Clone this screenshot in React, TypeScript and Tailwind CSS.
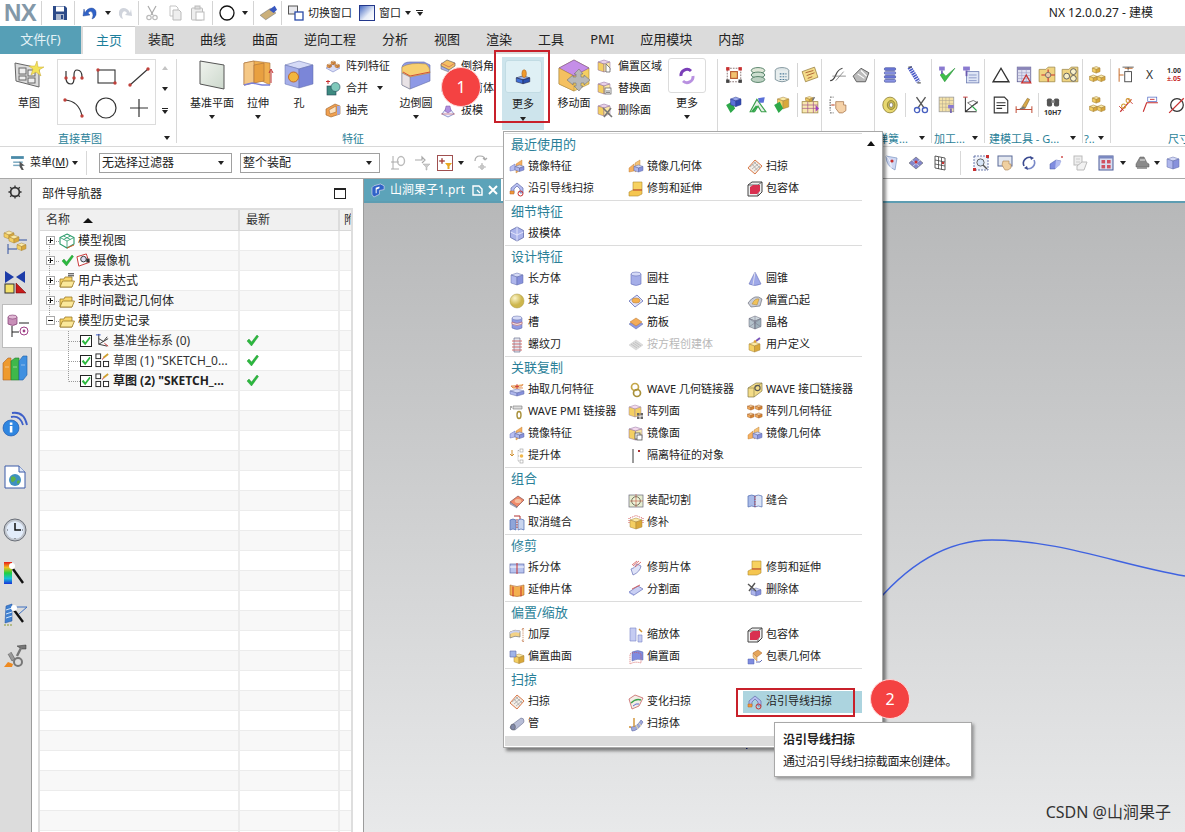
import type { ReactNode } from "react";

// small drawing helpers
function Ico({ s = 16, v = 16, children }: { s?: number; v?: number; children: ReactNode }) {
  return (
    <svg width={s} height={s} viewBox={`0 0 ${v} ${v}`} className="shrink-0">
      {children}
    </svg>
  );
}

function Cube({ x = 2, y = 3, w = 6, h = 4, d = 6, t = "#d5daf6", l = "#aeb6ec", r = "#8791dc", o = "#5f6aa8" }: { x?: number; y?: number; w?: number; h?: number; d?: number; t?: string; l?: string; r?: string; o?: string }) {
  const top = `${x},${y + h * 0.5} ${x + w},${y} ${x + 2 * w},${y + h * 0.5} ${x + w},${y + h}`;
  const left = `${x},${y + h * 0.5} ${x + w},${y + h} ${x + w},${y + h + d} ${x},${y + h * 0.5 + d}`;
  const right = `${x + w},${y + h} ${x + 2 * w},${y + h * 0.5} ${x + 2 * w},${y + h * 0.5 + d} ${x + w},${y + h + d}`;
  return (
    <g stroke={o} strokeWidth="0.5">
      <polygon points={top} fill={t} />
      <polygon points={left} fill={l} />
      <polygon points={right} fill={r} />
    </g>
  );
}

const Y = { t: "#fbeaa6", l: "#f4cf62", r: "#d9a83a", o: "#a8843a" };
const O = { t: "#fbd9a8", l: "#f3ac5a", r: "#d9852f", o: "#a8632a" };

const sweepIcon = (
  <>
    <polygon points="1,9 8,1 15,7 8,15" fill="#f3ede6" stroke="#d97a4a" strokeWidth="1" />
    <path d="M3,8 L9,3 M5,10 L11,5 M7,12 L13,7 M5,5 L11,12 M7,3 L13,9" stroke="#a8a8a8" strokeWidth="0.8" />
  </>
);
const guideIcon = (
  <>
    <path d="M2,12 V7 L8,2 L14,7 V12 H11 V8 L8,5 L5,8 V12 Z" fill="#b5bdf0" stroke="#5f6aa8" strokeWidth="0.7" />
    <path d="M1,10 H5 V13 H1 Z" fill="#ef9a3a" stroke="#b5602a" strokeWidth="0.5" />
    <circle cx="11.5" cy="12.5" r="2.5" fill="none" stroke="#c83030" strokeWidth="1" />
  </>
);
const trimIcon = (
  <>
    <path d="M5,1 H14 V9 H5 Z" fill="#f7d260" stroke="#b08a30" strokeWidth="0.6" />
    <path d="M1,11 L5,9 H14 V13 L10,15 H1 Z" fill="#f5c650" stroke="#b08a30" strokeWidth="0.6" />
    <path d="M5,9 H14" stroke="#c83030" strokeWidth="0.8" />
  </>
);
const bboxIcon = (
  <>
    <path d="M1,4 L5,1 H15 V11 L11,15 H1 Z" fill="#eee" stroke="#444" strokeWidth="1" />
    <path d="M1,4 H11 V15 M11,4 L15,1" stroke="#444" fill="none" strokeWidth="0.8" />
    <path d="M3,6 L6,4 H13 V10 L10,13 H3 Z" fill="#d93050" />
  </>
);
const mirrorFIcon = (
  <>
    <polygon points="7,5 13,1 13,10 7,14" fill="#f6b060" stroke="#b8742a" strokeWidth="0.4" />
    <polygon points="1,8 6,5 6,11 1,12" fill="#b7bdf0" stroke="#6770b8" strokeWidth="0.5" />
    <Cube x={6} y={6} w={4.5} h={3} d={3.5} />
  </>
);
const mirrorBIcon = (
  <>
    <polygon points="1,9 6,5 6,12 1,13" fill="#f6b060" stroke="#b8742a" strokeWidth="0.4" />
    <polygon points="7,4 12,1 12,9 7,13" fill="#f4c47a" stroke="#b8742a" strokeWidth="0.4" />
    <Cube x={6} y={6} w={4.5} h={3} d={4} />
  </>
);

const icons: Record<string, ReactNode> = {
  mirrorF: mirrorFIcon,
  mirrorB: mirrorBIcon,
  sweep: sweepIcon,
  guide: guideIcon,
  trim: trimIcon,
  bbox: bboxIcon,
  draft: (
    <>
      <polygon points="8,1 14.5,4.5 14.5,11.5 8,15 1.5,11.5 1.5,4.5" fill="#aab3ea" stroke="#5f6aa8" strokeWidth="0.8" />
      <path d="M1.5,6 L8,9 L14.5,6 M8,1 V15" stroke="#eef" strokeWidth="0.8" fill="none" />
    </>
  ),
  box: <Cube x={2} y={2} w={6} h={4} d={8} />,
  cyl: (
    <>
      <path d="M3,3 V13 Q8,16 13,13 V3 Z" fill="#a5aee8" stroke="#6670b8" strokeWidth="0.6" />
      <ellipse cx="8" cy="3" rx="5" ry="2" fill="#d5daf6" stroke="#6670b8" strokeWidth="0.6" />
    </>
  ),
  cone: (
    <>
      <path d="M8,1 L2,13 Q8,16 14,13 Z" fill="#9ea8e8" stroke="#6670b8" strokeWidth="0.6" />
      <path d="M8,1 L6,14" stroke="#dde" strokeWidth="1" />
    </>
  ),
  sphere: (
    <>
      <defs>
        <radialGradient id="sph" cx="35%" cy="30%">
          <stop offset="0" stopColor="#fbf4c8" />
          <stop offset="1" stopColor="#cdb64c" />
        </radialGradient>
      </defs>
      <circle cx="8" cy="8" r="7" fill="url(#sph)" stroke="#a9973f" strokeWidth="0.5" />
    </>
  ),
  boss: (
    <>
      <polygon points="1,8 9,2 15,8 7,14" fill="#dfe2f8" stroke="#6670b8" strokeWidth="0.8" />
      <ellipse cx="8" cy="7.5" rx="4" ry="2.5" fill="#f4b04e" stroke="#b8742a" strokeWidth="0.5" />
    </>
  ),
  offBoss: (
    <>
      <path d="M1,10 Q8,0 15,6 L13,13 L4,14 Z" fill="#c9ccd6" stroke="#70737e" strokeWidth="0.7" />
      <path d="M5,11 Q8,5 12,6 L10,12 Z" fill="#f1c25a" stroke="#a8843a" strokeWidth="0.5" />
    </>
  ),
  groove: (
    <>
      <path d="M3,3 V13 Q8,16 13,13 V3 Z" fill="#8f99e2" stroke="#5f6aa8" strokeWidth="0.5" />
      <ellipse cx="8" cy="3" rx="5" ry="2" fill="#d5daf6" stroke="#5f6aa8" strokeWidth="0.5" />
      <path d="M3,7 Q8,10 13,7 V9 Q8,12 3,9 Z" fill="#efe8e8" stroke="#c05050" strokeWidth="0.5" />
    </>
  ),
  rib: (
    <>
      <polygon points="1,9 8,5 15,9 8,14" fill="#8f99e2" stroke="#5f6aa8" strokeWidth="0.5" />
      <polygon points="2,7 8,3 14,7 8,11" fill="#f3ac5a" stroke="#b8742a" strokeWidth="0.5" />
    </>
  ),
  lattice: (
    <>
      <Cube x={2} y={1} w={6} h={5} d={8} t="#cfd8de" l="#b5c3cc" r="#9fb0bb" o="#667" />
      <path d="M2,3.5 L14,12 M14,3.5 L2,12 M8,1 V14" stroke="#778" strokeWidth="0.5" />
    </>
  ),
  thread: (
    <>
      <path d="M5,1 H11 V15 H5 Z" fill="#e4e6f0" stroke="#6d7390" strokeWidth="0.7" />
      <path d="M3,4 H13 M3,7 H13 M3,10 H13 M3,13 H13" stroke="#d06060" strokeWidth="0.9" />
    </>
  ),
  eqn: (
    <>
      <polygon points="1,8 8,3 15,8 8,13" fill="#ddd" stroke="#ccc" strokeWidth="0.5" />
      <path d="M3,7 L9,11 M5,6 L11,10 M7,5 L13,9" stroke="#bbb" strokeWidth="0.8" />
    </>
  ),
  udf: (
    <>
      <Cube x={2} y={5} w={5.5} h={4} d={6} {...Y} />
      <path d="M9,4 L13,1" stroke="#7a55b8" strokeWidth="2" />
      <circle cx="8" cy="4.5" r="1.3" fill="#e0a030" />
    </>
  ),
  extract: (
    <>
      <Cube x={1} y={7} w={7} h={4} d={3} />
      <path d="M2,4 H13 L14,2 M2,4 L4,6 H14" fill="#f5c98a" stroke="#d97a3a" strokeWidth="0.8" />
      <path d="M8,2 V7 M6,4.5 H10" stroke="#c83030" strokeWidth="0.8" />
    </>
  ),
  waveL: (
    <>
      <ellipse cx="7" cy="5" rx="3.5" ry="3.5" fill="none" stroke="#c4a648" strokeWidth="1.7" />
      <ellipse cx="9" cy="11" rx="3.5" ry="3.5" fill="none" stroke="#a8903a" strokeWidth="1.7" />
    </>
  ),
  waveI: (
    <>
      <path d="M1,6 L9,1 H15 V9 L7,15 H1 Z" fill="#f3dc88" stroke="#857a48" strokeWidth="0.7" />
      <path d="M1,6 H7 V15 M7,6 L15,1" stroke="#857a48" strokeWidth="0.6" fill="none" />
      <ellipse cx="10.5" cy="6" rx="2.6" ry="2.6" fill="none" stroke="#555" strokeWidth="1.1" />
    </>
  ),
  waveP: (
    <>
      <path d="M4,2 H13 V5 H4 Z" fill="#dcdcdc" stroke="#777" strokeWidth="0.6" />
      <path d="M1,3 H3 M1,5 H2" stroke="#555" strokeWidth="1" />
      <ellipse cx="10" cy="11" rx="2" ry="3.5" fill="none" stroke="#a8903a" strokeWidth="1.4" />
    </>
  ),
  patF: (
    <>
      <Cube x={1} y={1} w={6} h={4} d={8} t="#f3d9ee" l="#f4cf62" r="#f4cf62" o="#a084a0" />
      <rect x="9" y="9" width="2.5" height="2.5" fill="#666" />
      <rect x="12.5" y="9" width="2.5" height="2.5" fill="#666" />
      <rect x="9" y="12.5" width="2.5" height="2.5" fill="#666" />
      <rect x="12.5" y="12.5" width="2.5" height="2.5" fill="#666" />
    </>
  ),
  patG: (
    <>
      <Cube x={0.5} y={1} w={3.3} h={2.4} d={2.6} {...O} />
      <Cube x={8.5} y={1} w={3.3} h={2.4} d={2.6} {...O} />
      <Cube x={0.5} y={9} w={3.3} h={2.4} d={2.6} {...O} />
      <Cube x={8.5} y={9} w={3.3} h={2.4} d={2.6} {...O} />
    </>
  ),
  mirrorFc: (
    <>
      <Cube x={1} y={1} w={6.5} h={4} d={9} t="#f3d9ee" l="#f4cf62" r="#f7e9a8" o="#8a6a9a" />
      <rect x="7" y="7" width="5" height="6" fill="#fff" stroke="#555" strokeWidth="0.8" />
      <rect x="9" y="9" width="5" height="5" fill="#fff" stroke="#555" strokeWidth="0.8" />
    </>
  ),
  promote: (
    <>
      <path d="M3,2 V8 L1,6 M3,8 L5,6" fill="none" stroke="#d09030" strokeWidth="1" />
      <path d="M9,2.5 H14 M9,2.5 V13 M9,8 H11 M9,13 H11" fill="none" stroke="#999" strokeWidth="0.7" strokeDasharray="1 1" />
      <rect x="11" y="1" width="3" height="3" fill="#fff" stroke="#999" strokeWidth="0.6" />
      <circle cx="12.5" cy="8" r="1.8" fill="#f1b84c" />
      <rect x="11" y="12" width="3" height="3" fill="#fff" stroke="#999" strokeWidth="0.6" />
    </>
  ),
  isolate: (
    <>
      <path d="M5,1 V15" stroke="#222" strokeWidth="0.9" />
      <rect x="10" y="2" width="2" height="2" fill="#a83030" />
    </>
  ),
  bossB: (
    <>
      <polygon points="1,9 9,3 15,7 8,14" fill="#f08a6a" stroke="#885050" strokeWidth="0.7" />
      <polygon points="1,9 8,14 8,15 1,11" fill="#a8a8c8" stroke="#666" strokeWidth="0.4" />
      <ellipse cx="9" cy="8" rx="3.3" ry="2" fill="#f5c0a0" />
    </>
  ),
  assy: (
    <>
      <rect x="1" y="2" width="14" height="12" fill="#e7edcf" stroke="#667" strokeWidth="0.7" />
      <circle cx="8" cy="8" r="4.3" fill="#eef3d8" stroke="#665" strokeWidth="0.9" />
      <path d="M8,1 V14 M2,8 H15" stroke="#c05040" strokeWidth="0.6" />
    </>
  ),
  sew: (
    <>
      <path d="M1,3 Q5,1 8,3 V14 Q5,12 1,14 Z" fill="#a9bbe8" stroke="#4f6ab0" strokeWidth="0.7" />
      <path d="M15,3 Q11,1 8,3 V14 Q11,12 15,14 Z" fill="#dbe4f6" stroke="#4f6ab0" strokeWidth="0.7" />
      <path d="M8,3 V14" stroke="#c83030" strokeWidth="0.8" strokeDasharray="1.5 1" />
    </>
  ),
  unsew: (
    <>
      <path d="M1,5 Q4,3 7,5 V15 Q4,13 1,15 Z" fill="#8fa5d8" stroke="#4f6ab0" strokeWidth="0.7" />
      <path d="M15,5 Q12,3 9,5 V15 Q12,13 15,15 Z" fill="#c8d4ee" stroke="#4f6ab0" strokeWidth="0.7" />
      <path d="M5,1 H11 V4" fill="none" stroke="#b03030" strokeWidth="1" />
      <path d="M8,4 V14" stroke="#a83030" strokeWidth="1" strokeDasharray="1.5 1" />
    </>
  ),
  patch: (
    <>
      <Cube x={2} y={3} w={6} h={4} d={7} {...Y} />
      <path d="M2,3 L8,0.5 L14,3" fill="none" stroke="#c83030" strokeWidth="0.8" strokeDasharray="1 1" />
      <path d="M1,8 V3 M15,8 V3" stroke="#c83030" strokeWidth="0.8" strokeDasharray="1 1" />
    </>
  ),
  split: (
    <>
      <rect x="1" y="4" width="14" height="9" fill="#b8c4ee" stroke="#5f6aa8" strokeWidth="0.7" />
      <path d="M1,7 H15" stroke="#fff" strokeWidth="1" />
      <path d="M8,3 V14" stroke="#c83030" strokeWidth="1" />
    </>
  ),
  trimS: (
    <>
      <path d="M3,9 Q6,9 9,4 L13,6 Q12,12 5,15 Z" fill="#dfe3f8" stroke="#6670b8" strokeWidth="0.7" />
      <path d="M5,6 L11,1 M7,7 L13,2 M4,5 L9,1" stroke="#d05050" strokeWidth="0.8" />
    </>
  ),
  extS: (
    <>
      <path d="M1,3 Q8,6 15,3 V13 Q8,16 1,13 Z" fill="#f3b04f" stroke="#a8632a" strokeWidth="0.6" />
      <path d="M4,4.5 V14.5 M12,4.5 V14.5" stroke="#c83030" strokeWidth="1" />
    </>
  ),
  divF: (
    <>
      <polygon points="1,10 10,4 15,7 6,13" fill="#c9cff4" stroke="#6670b8" strokeWidth="0.7" />
      <path d="M4,7 L12,3" stroke="#d05050" strokeWidth="0.9" />
      <polygon points="1,10 6,13 6,14 1,11" fill="#9aa4e4" />
    </>
  ),
  delB: (
    <>
      <Cube x={4} y={6} w={5} h={3.5} d={4.5} />
      <path d="M1,2 L9,9 M8,1 L2,9" stroke="#555" strokeWidth="1.4" />
    </>
  ),
  thick: (
    <>
      <path d="M1,5 Q6,2 11,4 V10 Q6,8 1,11 Z" fill="#f3d285" stroke="#777" strokeWidth="0.7" />
      <path d="M1,5 Q6,2 11,4 L10,6 Q6,4 1,7 Z" fill="#c9d0ef" />
      <path d="M14,1 V15 M13,3 L14,1 L15,3 M13,13 L14,15 L15,13" fill="none" stroke="#c07040" strokeWidth="0.7" strokeDasharray="1.4 0.8" />
    </>
  ),
  scale: (
    <>
      <path d="M2,1 H8 V14 H2 Z" fill="#c5ccf2" stroke="#7a84c8" strokeWidth="0.6" />
      <path d="M10,8 H14 V15 H10 Z" fill="#c5ccf2" stroke="#7a84c8" strokeWidth="0.6" />
      <path d="M11,2 L14,5" stroke="#d09030" strokeWidth="1.4" />
    </>
  ),
  offS: (
    <>
      <Cube x={5} y={5} w={5} h={3.5} d={6} {...Y} />
      <path d="M1,2 H7 V8 H1 Z" fill="#9fb4e8" stroke="#5f6aa8" strokeWidth="0.6" />
    </>
  ),
  offF: (
    <>
      <path d="M4,3 Q10,0 15,3 V11 Q9,9 4,12 Z" fill="#7f8ce0" stroke="#5f6aa8" strokeWidth="0.5" />
      <path d="M2,5 Q8,2 13,5 V14 Q7,12 2,15 Z" fill="none" stroke="#d05050" strokeWidth="0.8" strokeDasharray="1 1" />
    </>
  ),
  wrap: (
    <>
      <polygon points="6,4 11,1 15,4 10,8" fill="#e5a55a" stroke="#a8632a" strokeWidth="0.5" />
      <polygon points="6,4 10,8 10,12 6,8" fill="#f3c47e" stroke="#a8632a" strokeWidth="0.4" />
      <path d="M1,10 H7 V15 H1 Z" fill="#7f8ce0" stroke="#5060b0" strokeWidth="0.5" />
      <path d="M9,13 H13 L15,11" stroke="#6670b8" fill="none" strokeWidth="1" />
    </>
  ),
  varS: (
    <>
      <path d="M1,5 L7,1 L15,4 L11,12 L4,15 Z" fill="#f3ede6" stroke="#c05050" strokeWidth="0.7" />
      <path d="M3,9 Q8,4 13,6" stroke="#3aa04a" strokeWidth="1.4" fill="none" />
      <path d="M5,12 Q8,9 11,10" stroke="#5f6ad0" strokeWidth="1" fill="none" />
    </>
  ),
  tube: (
    <>
      <path d="M4,8 L12,2 Q15,2 15,5 Q15,7 13,8 L6,14 Q3,14 1,12 Q1,10 4,8 Z" fill="#b7bdd6" stroke="#6a7090" strokeWidth="0.6" />
      <ellipse cx="4" cy="11" rx="2.4" ry="3" fill="#8088a8" stroke="#555" strokeWidth="0.5" />
    </>
  ),
  swept: (
    <>
      <path d="M3,11 Q9,11 13,4 L15,6 Q10,15 4,15 Z" fill="#9ea8d8" stroke="#5f6aa8" strokeWidth="0.6" />
      <path d="M6,2 V11 M3,11 H1" stroke="#d09030" strokeWidth="1.4" />
      <path d="M8,9 L10,13 M11,7 L13,10" stroke="#f0e0a0" strokeWidth="0.9" />
    </>
  ),
  // ribbon small
  pattern: (
    <>
      <polygon points="1,10 8,6 15,10 8,14" fill="#d8dcf6" stroke="#7a84c8" strokeWidth="0.6" />
      <Cube x={2} y={6} w={2.2} h={1.8} d={2} {...O} />
      <Cube x={6} y={3} w={2.2} h={1.8} d={2} {...O} />
      <Cube x={10} y={6} w={2.2} h={1.8} d={2} {...O} />
    </>
  ),
  unite: (
    <>
      <rect x="2" y="6" width="9" height="9" fill="#3d8a80" stroke="#245" strokeWidth="0.6" />
      <circle cx="10.5" cy="7" r="4.5" fill="#7fc9bb" stroke="#245" strokeWidth="0.6" />
      <path d="M1,1.5 H5 M3,0 V4" stroke="#c83030" strokeWidth="1" />
    </>
  ),
  shell: (
    <>
      <path d="M1,7 L10,2 L15,4 V12 L6,15 L1,13 Z" fill="#f0a050" stroke="#99602a" strokeWidth="0.6" />
      <path d="M4,8 L11,4 V10 L5,12 Z" fill="#fbe4c4" stroke="#99602a" strokeWidth="0.5" />
      <path d="M12,4 L15,4 V12 L12,13 Z" fill="#a0a8e0" />
    </>
  ),
  chamfer: (
    <>
      <polygon points="1,6 7,2 15,5 15,8 9,12 1,8" fill="#f4c063" stroke="#666" strokeWidth="0.7" />
      <polygon points="1,8 9,12 9,14 1,11" fill="#a7b0ea" stroke="#666" strokeWidth="0.5" />
      <path d="M1,5 L9,9 L15,5" stroke="#c05050" fill="none" strokeWidth="0.6" />
    </>
  ),
  draftR: (
    <>
      <polygon points="2,12 8,4 14,12 8,15" fill="#eef" stroke="#6670b8" strokeWidth="0.7" />
      <polygon points="6,4 10,4 11,9 8,11 5,9" fill="#b090e0" stroke="#7a50a0" strokeWidth="0.5" />
      <path d="M1,12 H15" stroke="#c05050" strokeWidth="0.6" />
    </>
  ),
  offReg: (
    <>
      <Cube x={1} y={2} w={6} h={4} d={8} t="#e8d0e8" l="#f4cf62" r="#fbe8a8" o="#8a6a9a" />
      <path d="M9,6 V14 H13 V10 L11,8 Z" fill="#fff" stroke="#555" strokeWidth="0.7" />
    </>
  ),
  replF: (
    <>
      <Cube x={1} y={2} w={6} h={4} d={8} t="#e8d0e8" l="#f4cf62" r="#fbe8a8" o="#8a6a9a" />
      <rect x="8" y="8" width="6" height="6" fill="#fff" stroke="#555" strokeWidth="0.7" />
      <path d="M9,11 H13 M9,12.5 H13" stroke="#555" strokeWidth="0.7" />
    </>
  ),
  delF: (
    <>
      <Cube x={1} y={2} w={6} h={4} d={8} t="#e8d0e8" l="#f4cf62" r="#fbe8a8" o="#8a6a9a" />
      <path d="M6,6 L15,15 M14,6 L7,15" stroke="#777" strokeWidth="1.6" />
    </>
  ),
  // right hand cluster
  r1: (
    <>
      <rect x="2" y="2" width="12" height="12" fill="none" stroke="#7f6a6a" strokeWidth="0.8" strokeDasharray="1.5 1" />
      <rect x="5" y="5" width="6" height="6" fill="#f3c270" stroke="#b85a30" />
      <rect x="1" y="1" width="3" height="3" fill="#c83030" />
      <rect x="12" y="1" width="3" height="3" fill="#c83030" />
      <rect x="1" y="12" width="3" height="3" fill="#444" />
      <rect x="12" y="12" width="3" height="3" fill="#444" />
    </>
  ),
  r2: (
    <>
      <ellipse cx="8" cy="4" rx="6" ry="2.6" fill="#dfe7d8" stroke="#4c7a60" strokeWidth="0.8" />
      <ellipse cx="8" cy="8" rx="6" ry="2.6" fill="#cddfd0" stroke="#4c7a60" strokeWidth="0.8" />
      <ellipse cx="8" cy="12" rx="6" ry="2.6" fill="#bcd1c2" stroke="#4c7a60" strokeWidth="0.8" />
    </>
  ),
  r3: (
    <>
      <ellipse cx="8" cy="4" rx="6" ry="2.6" fill="#dfe7e8" stroke="#7a9098" strokeWidth="0.8" />
      <path d="M2,4 V12 Q8,16 14,12 V4" fill="#e8eeee" stroke="#7a9098" strokeWidth="0.8" />
      <path d="M6,7 H12 M6,9.5 H12 M6,12 H12" stroke="#4c7a98" strokeWidth="0.9" strokeDasharray="1.5 1" />
    </>
  ),
  r4: (
    <>
      <path d="M1,5 L12,1 L15,10 L4,14 Z" fill="#f4dc8a" stroke="#998040" strokeWidth="0.7" />
      <path d="M4,6 L11,4 M5,8.5 L12,6 M6,11 L10,9.5" stroke="#a85a30" strokeWidth="0.8" />
    </>
  ),
  r5: (
    <>
      <path d="M1,13 Q4,13 6,8 T12,2" fill="none" stroke="#444" strokeWidth="1.1" />
      <path d="M6,13 L13,5 M3,9 H15" stroke="#777" strokeWidth="0.7" />
    </>
  ),
  r6: (
    <>
      <path d="M1,9 L8,2 L15,6 L12,14 L4,14 Z" fill="#bbb" stroke="#555" strokeWidth="0.8" />
      <path d="M5,7 L11,11 M8,4 L13,9" stroke="#fff" strokeWidth="1" />
    </>
  ),
  r7: (
    <>
      <rect x="3" y="1.5" width="10" height="2.4" rx="1" fill="#6c78d8" stroke="#34408c" strokeWidth="0.5" />
      <rect x="3" y="5" width="10" height="2.4" rx="1" fill="#8a94e4" stroke="#34408c" strokeWidth="0.5" />
      <rect x="3" y="8.5" width="10" height="2.4" rx="1" fill="#6c78d8" stroke="#34408c" strokeWidth="0.5" />
      <rect x="3" y="12" width="10" height="2.4" rx="1" fill="#8a94e4" stroke="#34408c" strokeWidth="0.5" />
    </>
  ),
  r8: (
    <>
      <path d="M4,1 L12,14" stroke="#4a5ac8" strokeWidth="4" strokeDasharray="1.4 0.7" />
      <path d="M3,1 H6 M11,15 H14" stroke="#555" strokeWidth="1" />
    </>
  ),
  r9: (
    <>
      <path d="M2,8 L6,14 L15,2 L7,9 L4,6 Z" fill="#3fbf4a" stroke="#1e8a30" strokeWidth="0.5" />
      <rect x="1" y="0.5" width="5" height="3.5" fill="#8a7ad0" />
      <path d="M3.5,4 V7" stroke="#6a5ab0" strokeWidth="1.4" />
    </>
  ),
  r10: (
    <>
      <rect x="4" y="5" width="11" height="10" fill="#dfe6f6" stroke="#6a7ab0" strokeWidth="0.7" />
      <path d="M6,8 H13 M6,10.5 H13 M6,13 H13" stroke="#7a8ac0" strokeWidth="0.7" />
      <rect x="1" y="0.5" width="6" height="3.5" fill="#8a7ad0" />
      <path d="M4,4 V9" stroke="#6a5ab0" strokeWidth="1.6" />
    </>
  ),
  r11: <path d="M8,2 L15,14 H1 Z" fill="none" stroke="#333" strokeWidth="1.2" />,
  r12: (
    <>
      <rect x="2" y="1" width="12" height="13" fill="#dfe0f0" stroke="#5a5a90" strokeWidth="0.7" />
      <rect x="2" y="1" width="12" height="2.5" fill="#8a84b8" />
      <path d="M2,6 H14 M2,8.5 H14 M2,11 H14 M6,3 V14 M10,3 V14" stroke="#9a9ac0" strokeWidth="0.5" />
      <path d="M10,8 L14,15 H6 Z" fill="none" stroke="#c83030" strokeWidth="1.1" />
    </>
  ),
  r13: (
    <>
      <path d="M1,3 H7 L9,1 H15 V14 H1 Z" fill="#f0d480" stroke="#a08a48" strokeWidth="0.7" />
      <path d="M9,3 V14 M3,8 H15" stroke="#c83030" strokeWidth="1" />
      <circle cx="9" cy="8" r="2.4" fill="#e8c8a8" stroke="#555" strokeWidth="0.6" />
    </>
  ),
  r14: (
    <>
      <path d="M1,3 H7 L9,1 H15 V14 H1 Z" fill="#f0d480" stroke="#a08a48" strokeWidth="0.7" />
      <circle cx="11" cy="5" r="2.6" fill="#f8f0c8" stroke="#555" strokeWidth="0.8" />
      <circle cx="11" cy="11" r="2.6" fill="#f8f0c8" stroke="#555" strokeWidth="0.8" />
      <circle cx="5" cy="9" r="2.6" fill="#f8f0c8" stroke="#555" strokeWidth="0.8" />
    </>
  ),
  cubes: (
    <>
      <Cube x={3} y={0.5} w={3.4} h={2.6} d={3.2} {...Y} />
      <Cube x={0.5} y={8} w={3.4} h={2.6} d={3.2} {...Y} />
      <Cube x={7.5} y={8} w={3.4} h={2.6} d={3.2} {...Y} />
    </>
  ),
  dim: (
    <>
      <rect x="6" y="5" width="6" height="9" fill="none" stroke="#444" strokeWidth="0.8" />
      <path d="M1,2 V14 M1,8 H5 M6,2 H13" stroke="#c87030" strokeWidth="0.9" />
      <path d="M4,1 H14 M9,1 V4" stroke="#444" strokeWidth="0.7" />
    </>
  ),
  s1: (
    <>
      <path d="M1,8 L5,15 L9,11 L6,5 Z" fill="#2ea84a" />
      <Cube x={5} y={1} w={4.6} h={3.4} d={5} t="#9aa8ec" l="#5a70d8" r="#3048b0" o="#2a3a90" />
    </>
  ),
  s2: (
    <>
      <path d="M1,14 L7,3 L15,14 L11,14 L8,9 L5,14 Z" fill="#eaf0ea" stroke="#3aa04a" strokeWidth="1" />
      <path d="M8,2 L14,1 L13,6 L9,6 Z" fill="#5a70d8" />
      <path d="M3,14 L7,9" stroke="#2ea84a" strokeWidth="2" />
    </>
  ),
  s3: (
    <>
      <Cube x={4} y={1} w={5} h={3.4} d={7} {...Y} />
      <path d="M1,8 L5,15 L9,11 L6,5 Z" fill="#2ea84a" />
    </>
  ),
  s4: (
    <>
      <rect x="1" y="5" width="14" height="10" fill="#f8e8b0" stroke="#a08a48" strokeWidth="0.7" />
      <path d="M1,8 H15 M1,11 H15 M6,5 V15 M11,5 V15" stroke="#a0508a" strokeWidth="0.6" />
      <Cube x={4} y={0.5} w={3.4} h={2.4} d={2.2} {...Y} />
      <path d="M12,1 L10,4" stroke="#777" strokeWidth="1.4" />
      <path d="M13,8 L16,11 L13,14 Z" fill="#a040c0" />
    </>
  ),
  s5: (
    <>
      <path d="M1,1 H4 M1,15 H4 M1,3 V13" stroke="#333" strokeWidth="0.8" strokeDasharray="1.3 1" />
      <path d="M6,5 H13 V8 H15 V13 L12,15 H9 L6,11 Z" fill="#f5d2a8" stroke="#a87850" strokeWidth="0.7" />
      <path d="M2,8 H5" stroke="#c05030" strokeWidth="1" />
    </>
  ),
  s6: (
    <>
      <ellipse cx="8" cy="8" rx="6.4" ry="7" fill="#e8d870" stroke="#887a30" strokeWidth="0.7" />
      <ellipse cx="9" cy="8" rx="3.4" ry="4" fill="#c8b850" stroke="#887a30" strokeWidth="0.7" />
      <ellipse cx="9" cy="8" rx="1.6" ry="2" fill="#fff" stroke="#555" strokeWidth="0.5" />
    </>
  ),
  s7: (
    <>
      <path d="M4,1 L11,11 M12,1 L5,11" stroke="#555" strokeWidth="1.2" />
      <circle cx="4.5" cy="12.5" r="2.3" fill="none" stroke="#4860c0" strokeWidth="1.2" />
      <circle cx="11.5" cy="12.5" r="2.3" fill="none" stroke="#4860c0" strokeWidth="1.2" />
    </>
  ),
  s8: (
    <>
      <rect x="1" y="1" width="13" height="13" fill="#f4e2a8" stroke="#9a9a9a" strokeWidth="0.7" />
      <path d="M1,4 H14 M1,7 H14 M1,10 H14 M4,1 V14 M7,1 V14 M10,1 V14" stroke="#b0a890" strokeWidth="0.5" />
      <path d="M9,8 H14 V11 H9 Z" fill="#8a7ad0" />
      <path d="M11.5,11 V15" stroke="#6a5ab0" strokeWidth="1.4" />
    </>
  ),
  s9: (
    <>
      <path d="M3,1 V14 L13,14 M3,14 L14,5" fill="none" stroke="#333" strokeWidth="0.9" />
      <path d="M5,6 L10,4 L14,6 L9,9 Z" fill="none" stroke="#555" strokeWidth="0.7" />
      <path d="M9,9 L13,13" stroke="#2ea84a" strokeWidth="1.2" />
      <path d="M1,1 H5" stroke="#c83030" strokeWidth="0.8" />
    </>
  ),
  s10: (
    <>
      <path d="M2,1 H11 L14,4 V15 H2 Z" fill="#fff" stroke="#333" strokeWidth="1" />
      <path d="M4,6 H12 M4,8.5 H12 M4,11 H9" stroke="#333" strokeWidth="0.9" />
    </>
  ),
  s11: (
    <>
      <path d="M1,12 H15 M1,9 V15 M15,9 V15" stroke="#c0503a" strokeWidth="0.9" />
      <path d="M6,10 L11,2 L13,3 L9,11 Z" fill="#d8a848" stroke="#806a30" strokeWidth="0.5" />
      <path d="M4,11 L8,9 L9,11 L5,12 Z" fill="#777" />
    </>
  ),
  s14: (
    <>
      <path d="M2,14 L12,3" stroke="#c83030" strokeWidth="1" />
      <path d="M1,9 L5,13 M8,2 L13,7" stroke="#c83030" strokeWidth="0.8" />
      <circle cx="9" cy="4" r="1.8" fill="none" stroke="#d0a030" strokeWidth="0.9" />
      <circle cx="5" cy="9" r="1.8" fill="none" stroke="#d0a030" strokeWidth="0.9" />
    </>
  ),
  s15: (
    <>
      <path d="M2,14 L5,6 H15" fill="none" stroke="#c83030" strokeWidth="1" />
      <rect x="6" y="1" width="8" height="4" fill="#fff" stroke="#4860c0" strokeWidth="0.6" />
      <path d="M8,3 H12" stroke="#c83030" strokeWidth="0.8" />
    </>
  ),
  s16: (
    <>
      <circle cx="8" cy="8" r="5.6" fill="none" stroke="#333" strokeWidth="1.1" />
      <path d="M1,15 L14,2" stroke="#c83030" strokeWidth="1.1" />
    </>
  ),
  // selection bar
  menuI: (
    <>
      <rect x="1" y="2" width="12" height="2.6" fill="#4a8aa8" />
      <rect x="3" y="7" width="9" height="1.4" fill="#7aa8c0" />
      <rect x="3" y="10" width="9" height="1.4" fill="#7aa8c0" />
      <path d="M9,7 L14,11 H11 L13,15 L11,15 L9,12 Z" fill="#555" />
    </>
  ),
  g1: (
    <>
      <path d="M3,1 V14 M1,7 H9 M1,14 H9" stroke="#aaa" strokeWidth="1" />
      <ellipse cx="11" cy="6" rx="3.5" ry="4.5" fill="none" stroke="#bbb" strokeWidth="1.4" />
    </>
  ),
  g2: (
    <>
      <path d="M1,5 H7 V2 L10,5 L7,8 M1,5 H0" fill="none" stroke="#aaa" strokeWidth="1.2" />
      <path d="M8,9 H15 L12,12 V15 H11 V12 Z" fill="#ccc" stroke="#aaa" strokeWidth="0.5" />
    </>
  ),
  g3: (
    <>
      <rect x="0.5" y="0.5" width="15" height="15" fill="#fff" stroke="#a05050" />
      <path d="M5,3 V9 M2,6 H8" stroke="#883030" strokeWidth="1" />
      <circle cx="5" cy="6" r="1.2" fill="none" stroke="#c04030" strokeWidth="0.7" />
      <path d="M8,8 H15 L12.5,11 V14 H10.5 V11 Z" fill="#e8a820" />
    </>
  ),
  g4: (
    <>
      <path d="M3,6 Q3,1 8,1 Q13,1 13,5 M13,5 L15,3 M13,5 L11,3" fill="none" stroke="#aaa" strokeWidth="1.2" />
      <path d="M10,8 V15 M6,12 H14" stroke="#bbb" strokeWidth="1.2" />
      <circle cx="10" cy="12" r="2" fill="none" stroke="#bbb" />
    </>
  ),
  t1: (
    <>
      <path d="M3,1 L14,3 L12,15 Q3,11 3,1 Z" fill="#cfd8f4" stroke="#7a94c0" strokeWidth="0.7" />
      <path d="M3,1 Q9,6 8,14" stroke="#fff" strokeWidth="0.8" fill="none" />
      <circle cx="9" cy="6" r="1.6" fill="#c83030" />
    </>
  ),
  t2: (
    <>
      <polygon points="8,2 15,8 8,14 1,8" fill="#8488cc" stroke="#555" strokeWidth="0.5" />
      <path d="M4,5 L11,11 M12,5 L5,11" stroke="#e8e8f8" strokeWidth="0.7" />
      <circle cx="8" cy="7" r="1.5" fill="#c83030" />
    </>
  ),
  t3: (
    <>
      <polygon points="3,1 13,3 13,15 3,13" fill="#fff" stroke="#333" strokeWidth="0.8" />
      <path d="M3,5 L13,7 M3,9 L13,11 M6.5,2 V14 M9.5,2.5 V14.5" stroke="#333" strokeWidth="0.7" />
      <circle cx="11" cy="8" r="1.2" fill="#c83030" />
    </>
  ),
  t4: (
    <>
      <rect x="1" y="1" width="14" height="14" fill="#eef2fa" stroke="#4a5a98" strokeWidth="0.8" strokeDasharray="2 1" />
      <circle cx="7.5" cy="7.5" r="3.6" fill="#d8e6f8" stroke="#555" strokeWidth="0.9" />
      <path d="M10,10 L14,14" stroke="#555" strokeWidth="1.4" />
      <rect x="0" y="13" width="3" height="3" fill="#c83030" />
      <rect x="13" y="0" width="3" height="3" fill="#c83030" />
    </>
  ),
  t5: (
    <>
      <rect x="1" y="1" width="14" height="10" fill="#e4e8f0" stroke="#5a6a98" />
      <path d="M6,6 H12 V9 H14 V13 L11,15 H8 L5,10 Z" fill="#f0d0a0" stroke="#a88050" strokeWidth="0.6" />
    </>
  ),
  t6: (
    <>
      <path d="M3,11 A6,6 0 0 1 11,3" fill="none" stroke="#3a4a90" strokeWidth="1.6" />
      <path d="M13,5 A6,6 0 0 1 5,13" fill="none" stroke="#7a8ac8" strokeWidth="1.6" />
      <path d="M9,1 L13,3 L10,5 Z M7,15 L3,13 L6,11 Z" fill="#3a4a90" />
    </>
  ),
  t7: (
    <>
      <polygon points="2,9 8,5 13,6 7,14 2,14" fill="#7f8ce0" stroke="#4a5aa0" strokeWidth="0.5" />
      <polygon points="8,5 13,6 12,10 7,14" fill="#b3bcf0" />
      <path d="M13,2 H15 M14,1 V3" stroke="#c83030" strokeWidth="0.8" />
    </>
  ),
  t8: (
    <>
      <rect x="2" y="1" width="8" height="9" fill="#eee" stroke="#bbb" />
      <path d="M4,4 H8 M4,7 H8" stroke="#ccc" />
      <path d="M5,11 L10,7 H15 L12,15 H5 Z" fill="#f2f2f2" stroke="#bbb" />
    </>
  ),
  t9: (
    <>
      <rect x="1" y="1" width="14" height="14" fill="#d8ddf0" stroke="#4a5a98" />
      <rect x="1" y="1" width="14" height="2.5" fill="#7a88c0" />
      <rect x="3.5" y="5" width="3.6" height="3.4" fill="#d05060" />
      <rect x="9" y="5" width="3.6" height="3.4" fill="#d05060" />
      <rect x="3.5" y="10" width="3.6" height="3.4" fill="#d05060" />
      <rect x="9" y="10" width="3.6" height="3.4" fill="#d05060" />
    </>
  ),
  t10: (
    <>
      <path d="M2,9 L6,2 H10 L13,8 L15,9 V12 H2 Z" fill="#8a8a8a" stroke="#555" strokeWidth="0.5" />
      <path d="M6,5 H11" stroke="#ddd" strokeWidth="1.2" />
      <path d="M3,13 H13" stroke="#777" strokeWidth="1.4" />
    </>
  ),
};

function Icon({ n, s = 16 }: { n: string; s?: number }) {
  return <Ico s={s}>{icons[n]}</Ico>;
}

function Caret({ c = "border-t-[#222]" }: { c?: string }) {
  return <span className={`inline-block w-0 h-0 border-x-[3.5px] border-t-[4px] border-x-transparent ${c}`} />;
}

function VSep({ h = "h-[24px]", m = "mx-[5px]" }: { h?: string; m?: string }) {
  return <div className={`w-px bg-[#d4d4d4] ${h} ${m}`} />;
}

// title bar
function TitleBar() {
  return (
    <div className="flex items-center h-[26px] bg-white pl-[4px] text-[11px] text-[#222]">
      <span className="w-[33px] font-['Liberation_Sans',sans-serif] font-bold text-[24px] leading-[24px] tracking-[-0.5px] text-[#8398a8]">NX</span>
      <VSep m="mx-[4px]" />
      <div className="ml-[6px]">
        <Ico>
          <path d="M1,1 H13 L15,3 V15 H1 Z" fill="#2c4a88" />
          <rect x="4" y="1.5" width="8" height="5" fill="#fff" />
          <rect x="4" y="9" width="8" height="6" fill="#aab6cc" />
          <rect x="9" y="10" width="2" height="4" fill="#2c4a88" />
        </Ico>
      </div>
      <VSep m="ml-[6px] mr-[7px]" />
      <Ico>
        <path d="M3,8 Q5,3 10,3 Q15,4 14,10 Q13,13 10,14 Q12,10 10,7 Q8,5 6,8 L8,10 L1,11 L2,4 Z" fill="#2f62c8" stroke="#1e408c" strokeWidth="0.4" />
      </Ico>
      <div className="ml-[7px] flex"><Caret /></div>
      <div className="ml-[6px]">
        <Ico>
          <path d="M13,8 Q11,3 6,3 Q1,4 2,10 Q3,13 6,14 Q4,10 6,7 Q8,5 10,8 L8,10 L15,11 L14,4 Z" fill="#d0d4dc" />
        </Ico>
      </div>
      <VSep m="ml-[5px] mr-[5px]" />
      <Ico>
        <path d="M4,1 L9,10 M12,1 L7,10" stroke="#aaa" strokeWidth="1.2" />
        <circle cx="5" cy="12.5" r="2.2" fill="none" stroke="#bbb" strokeWidth="1.2" />
        <circle cx="11" cy="12.5" r="2.2" fill="none" stroke="#bbb" strokeWidth="1.2" />
      </Ico>
      <div className="ml-[7px]">
        <Ico>
          <path d="M3,1 H9 L11,3 V11 H3 Z" fill="#fff" stroke="#c4c4c4" />
          <path d="M6,5 H12 L14,7 V15 H6 Z" fill="#eee" stroke="#bbb" />
        </Ico>
      </div>
      <div className="ml-[7px]">
        <Ico>
          <rect x="1.5" y="3" width="11" height="12" rx="1" fill="#eee" stroke="#bbb" />
          <rect x="5" y="1" width="5" height="3" fill="#ddd" stroke="#bbb" />
          <rect x="6" y="7" width="8" height="8" fill="#fff" stroke="#bbb" />
        </Ico>
      </div>
      <VSep m="ml-[6px] mr-[6px]" />
      <Ico>
        <circle cx="8" cy="8" r="7" fill="none" stroke="#111" strokeWidth="1.3" />
      </Ico>
      <div className="ml-[7px] flex"><Caret /></div>
      <VSep m="ml-[5px] mr-[5px]" />
      <Ico s={18}>
        <path d="M1,10 L10,4 L15,8 L6,14 Z" fill="#cbb07a" stroke="#777" strokeWidth="0.5" />
        <path d="M9,5 L14,1.5 L16,5 L13,8 Z" fill="#3858c0" />
      </Ico>
      <VSep m="ml-[4px] mr-[6px]" />
      <Ico>
        <rect x="0.5" y="1" width="9" height="8" fill="#e8e8ec" stroke="#555" />
        <rect x="7" y="7" width="8" height="8" fill="#fff" stroke="#2a4aa8" strokeWidth="1.3" />
      </Ico>
      <span className="ml-[4px] whitespace-nowrap">切换窗口</span>
      <div className="ml-[7px]">
        <Ico>
          <defs>
            <linearGradient id="win" x1="0" y1="0" x2="1" y2="1">
              <stop offset="0" stopColor="#3c62c0" />
              <stop offset="0.6" stopColor="#e8eef8" />
              <stop offset="1" stopColor="#fff" />
            </linearGradient>
          </defs>
          <rect x="0.5" y="0.5" width="15" height="15" fill="url(#win)" stroke="#23388c" />
        </Ico>
      </div>
      <span className="ml-[4px] w-[26px] whitespace-nowrap">窗口</span>
      <div className="flex"><Caret /></div>
      <div className="ml-[5px] flex flex-col items-center gap-[1px]">
        <div className="w-[7px] h-px bg-[#222]" />
        <Caret />
      </div>
      <span className="ml-auto mr-[32px] leading-none text-[12px]">NX 12.0.0.27 - 建模</span>
    </div>
  );
}

function Tabs() {
  const tabs = ["装配", "曲线", "曲面", "逆向工程", "分析", "视图", "渲染", "工具", "PMI", "应用模块", "内部"];
  return (
    <div className="flex h-[28px] bg-[#dbdbdb] text-[13px] leading-[26px] text-[#222]">
      <div className="w-[81px] bg-[#569fb6] text-[#e4f2f6] text-center">文件(F)</div>
      <div className="ml-[2px] w-[52px] bg-white border-t border-[#c8c8c8] text-center text-[#1d7f9c]">主页</div>
      {tabs.map((t) => (
        <div key={t} className="px-[13px]">{t}</div>
      ))}
    </div>
  );
}

// ribbon
function Group({ w, label, extra, children, sep = true, labelClass = "justify-center" }: { w: string; label?: string; extra?: boolean; children: ReactNode; sep?: boolean; labelClass?: string }) {
  return (
    <div className={`relative flex flex-col shrink-0 ${w}`}>
      <div className="flex h-[76px]">{children}</div>
      <div className={`flex items-center h-[16px] text-[11px] leading-none text-[#2a7f98] ${labelClass}`}>
        {label && <span className="whitespace-nowrap">{label}</span>}
        {extra && <span className="ml-auto mr-[7px] flex"><Caret /></span>}
      </div>
      {sep && <div className="absolute right-0 top-[5px] h-[84px] w-px bg-[#d8d8d8]" />}
    </div>
  );
}

function Big({ w, ml, label, arrow, children }: { w: string; ml: string; label: string; arrow?: boolean; children: ReactNode }) {
  return (
    <div className={`flex flex-col items-center shrink-0 ${w} ${ml}`}>
      <div className="h-[33px] mt-[4px] flex items-center">{children}</div>
      <span className="text-[11px] leading-[14px] mt-[5px] text-[#222] whitespace-nowrap">{label}</span>
      {arrow && <span className="flex mt-[5px]"><Caret /></span>}
    </div>
  );
}

function SmallRows({ ml, w, rows }: { ml: string; w: string; rows: [string, string, boolean?][] }) {
  return (
    <div className={`flex flex-col pt-[1px] shrink-0 ${ml} ${w}`}>
      {rows.map(([ic, t, a]) => (
        <div key={t} className="flex items-center h-[22px] gap-[5px] text-[11px] text-[#222] whitespace-nowrap">
          <Icon n={ic} />
          <span>{t}</span>
          {a && <span className="ml-[4px] flex"><Caret /></span>}
        </div>
      ))}
    </div>
  );
}

function GridIcons({ pl, gap, row1, row2 }: { pl: string; gap: string; row1: ReactNode; row2: ReactNode }) {
  return (
    <div className={`flex flex-col shrink-0 pt-[6px] ${pl}`}>
      <div className={`flex items-center h-[30px] ${gap}`}>{row1}</div>
      <div className={`flex items-center h-[30px] ${gap}`}>{row2}</div>
    </div>
  );
}

function Ribbon() {
  return (
    <div className="flex h-[92px] bg-white">
      <Group w="w-[177px]" label="直接草图" extra labelClass="justify-start pl-[58px]">
        <Big w="w-[36px]" ml="ml-[11px]" label="草图">
          <Ico s={32} v={32}>
            <polygon points="2,4 26,9 26,28 3,22" fill="#dcdcdc" stroke="#666" />
            <rect x="6" y="9" width="7" height="6" fill="#eee" stroke="#666" />
            <rect x="15" y="11" width="7" height="6" fill="#eee" stroke="#666" />
            <rect x="6" y="17" width="7" height="4" fill="#eee" stroke="#666" />
            <rect x="15" y="19" width="7" height="5" fill="#eee" stroke="#666" />
            <path d="M24,2 L25,8 L31,8 L26,11 L28,17 L23,13 L18,16 L20,10 L16,7 L22,7 Z" fill="#f3e35a" stroke="#c8a830" strokeWidth="0.5" />
          </Ico>
        </Big>
        <div className="ml-[10px] mt-[5px] w-[99px] h-[66px] border border-[#dcdcdc] grid grid-cols-3 place-items-center shrink-0 py-[1px]">
          <Ico s={24} v={24}>
            <path d="M4,6 V13 Q4,19 9,19 Q12,19 12,13 V10 Q12,5 15,5 Q20,5 20,12" fill="none" stroke="#333" strokeWidth="1.2" />
            <circle cx="4" cy="13" r="1.7" fill="#c0403a" /><circle cx="12" cy="13" r="1.7" fill="#c0403a" /><circle cx="20" cy="13" r="1.7" fill="#c0403a" />
          </Ico>
          <Ico s={24} v={24}>
            <rect x="4" y="5" width="17" height="13" fill="none" stroke="#333" strokeWidth="1.1" />
            <circle cx="4" cy="5" r="1.7" fill="#c0403a" /><circle cx="21" cy="18" r="1.7" fill="#c0403a" />
          </Ico>
          <Ico s={24} v={24}>
            <path d="M3,20 L21,4" stroke="#333" strokeWidth="1.1" />
            <circle cx="3" cy="20" r="1.7" fill="#c0403a" /><circle cx="21" cy="4" r="1.7" fill="#c0403a" />
          </Ico>
          <Ico s={24} v={24}>
            <path d="M3,4 Q17,5 20,20" fill="none" stroke="#333" strokeWidth="1.2" />
            <circle cx="3" cy="4" r="1.7" fill="#c0403a" /><circle cx="20" cy="20" r="1.7" fill="#c0403a" />
          </Ico>
          <Ico s={24} v={24}>
            <circle cx="12" cy="12" r="10" fill="none" stroke="#333" strokeWidth="1.2" />
          </Ico>
          <Ico s={24} v={24}>
            <path d="M12,3 V21 M3,12 H21" stroke="#333" strokeWidth="1.2" />
          </Ico>
        </div>
        <div className="flex flex-col items-center w-[17px] pt-[12px] gap-[17px]">
          <span className="w-0 h-0 border-x-[3.5px] border-b-[4px] border-x-transparent border-b-[#c4c4c4]" />
          <Caret />
          <span className="flex flex-col items-center gap-[1px]">
            <span className="w-[6px] h-px bg-[#222]" />
            <Caret />
          </span>
        </div>
      </Group>
      <Group w="w-[367px]" label="特征" sep={false} labelClass="justify-start pl-[165px]">
        <Big w="w-[44px]" ml="ml-[13px]" label="基准平面" arrow>
          <Ico s={30} v={30}>
            <defs>
              <linearGradient id="dp" x1="0" y1="0" x2="1" y2="1">
                <stop offset="0" stopColor="#f0f3ee" />
                <stop offset="1" stopColor="#ccd8cc" />
              </linearGradient>
            </defs>
            <polygon points="3,1 27,5 27,29 3,24" fill="url(#dp)" stroke="#555" />
          </Ico>
        </Big>
        <Big w="w-[32px]" ml="ml-[8px]" label="拉伸" arrow>
          <Ico s={32} v={32}>
            <polygon points="2,4 12,2 28,4 28,26 20,22 10,24 2,26" fill="#f0b050" stroke="#a8703a" strokeWidth="0.6" />
            <polygon points="2,4 12,2 12,24 2,26" fill="#f5c886" stroke="#a8703a" strokeWidth="0.6" />
            <polygon points="12,6 22,4 22,22 12,24" fill="#e8a040" stroke="#a8703a" strokeWidth="0.6" />
            <path d="M2,26 L10,24 L20,26 L28,26" stroke="#7a80d8" fill="none" strokeWidth="1.4" />
            <path d="M29,24 V12 M27,14 L29,10 L31,14" stroke="#c03030" strokeWidth="1" fill="none" />
          </Ico>
        </Big>
        <Big w="w-[30px]" ml="ml-[10px]" label="孔">
          <Ico s={30} v={30}>
            <Cube x={1} y={1} w={14} h={8} d={19} t="#d5daf6" l="#a5aee8" r="#7b86d8" />
            <circle cx="9.5" cy="17" r="5" fill="#f2b63e" stroke="#c06a2a" strokeWidth="1" />
          </Ico>
        </Big>
        <SmallRows ml="ml-[11px]" w="w-[70px]" rows={[["pattern", "阵列特征"], ["unite", "合并", true], ["shell", "抽壳"]]} />
        <Big w="w-[36px]" ml="ml-[3px]" label="边倒圆" arrow>
          <Ico s={32} v={32}>
            <path d="M2,8 Q3,3 10,3 H24 L30,6 V22 L10,30 L2,26 Z" fill="#8d99e6" stroke="#5f6aa8" strokeWidth="0.6" />
            <path d="M2,8 Q10,3 26,5 Q30,8 30,14 L10,18 L2,14 Z" fill="#f7cf70" stroke="#a8843a" strokeWidth="0.5" />
            <path d="M2,14 L10,18 V30 L2,26 Z" fill="#e8e2e6" stroke="#777" strokeWidth="0.5" />
            <path d="M3,13 L10,17 L30,13" fill="none" stroke="#c83030" strokeWidth="0.8" />
          </Ico>
        </Big>
        <SmallRows ml="ml-[6px]" w="w-[54px]" rows={[["chamfer", "倒斜角"], ["box", "修剪体"], ["draftR", "拔模"]]} />
      </Group>
      <Group w="w-[174px]" labelClass="justify-center">
        <Big w="w-[36px]" ml="ml-[12px]" label="移动面">
          <Ico s={34} v={34}>
            <polygon points="17,2 32,10 32,26 17,33 2,26 2,10" fill="#f4cf62" stroke="#a8843a" strokeWidth="0.6" />
            <polygon points="17,2 32,10 17,18 2,10" fill="#c58ee8" stroke="#7a50a0" strokeWidth="0.6" />
            <polygon points="2,10 17,18 17,33 2,26" fill="#f4c060" stroke="#a8843a" strokeWidth="0.5" />
            <path d="M22,11 L26,16 H24 V19 H27 V17 L33,22 L27,27 V25 H24 V28 H26 L22,33 L17,28 H19 V25 H16 V27 L10,22 L16,17 V19 H19 V16 H17 Z" fill="#b8b8b8" stroke="#666" strokeWidth="0.5" />
          </Ico>
        </Big>
        <SmallRows ml="ml-[5px]" w="w-[62px]" rows={[["offReg", "偏置区域"], ["replF", "替换面"], ["delF", "删除面"]]} />
        <div className="ml-[9px] shrink-0 w-[38px]">
          <div className="mt-[4px] h-[35px] border border-[#dcdcdc] rounded-[3px] flex items-center justify-center">
            <Ico s={20} v={20}>
              <path d="M4,10 A6,6 0 0 1 14,5" fill="none" stroke="#7a3fb8" strokeWidth="3" />
              <path d="M16,10 A6,6 0 0 1 6,15" fill="none" stroke="#b890e0" strokeWidth="3" />
            </Ico>
          </div>
          <div className="text-center text-[11px] leading-[14px] mt-[3px] text-[#222]">更多</div>
          <div className="flex justify-center mt-[5px]"><Caret /></div>
        </div>
      </Group>
      <Group w="w-[104px]">
        <GridIcons pl="pl-[7px]" gap="gap-[6px]"
          row1={<><Icon n="r1" s={18} /><Icon n="r2" s={18} /><Icon n="r3" s={18} /><VSep m="mr-[-3px]" /><Icon n="r4" s={18} /></>}
          row2={<><Icon n="s1" s={18} /><Icon n="s2" s={18} /><Icon n="s3" s={18} /><VSep m="mr-[-3px]" /><Icon n="s4" s={18} /></>}
        />
      </Group>
      <Group w="w-[53px]">
        <GridIcons pl="pl-[7px]" gap="gap-[5px]"
          row1={<><Icon n="r5" s={18} /><Icon n="r6" s={18} /></>}
          row2={<><Icon n="s5" s={18} /></>}
        />
      </Group>
      <Group w="w-[57px]" label="弹簧..." extra labelClass="justify-start pl-[2px]">
        <GridIcons pl="pl-[6px]" gap="gap-[6px]"
          row1={<><Icon n="r7" s={18} /><Icon n="r8" s={18} /></>}
          row2={<><Icon n="s6" s={18} /><div className="w-px h-[24px] bg-[#d8d8d8]" /><Icon n="s7" s={18} /></>}
        />
      </Group>
      <Group w="w-[53px]" label="加工..." extra labelClass="justify-start pl-[2px]">
        <GridIcons pl="pl-[6px]" gap="gap-[6px]"
          row1={<><Icon n="r9" s={18} /><Icon n="r10" s={18} /></>}
          row2={<><Icon n="s8" s={18} /><Icon n="s9" s={18} /></>}
        />
      </Group>
      <Group w="w-[98px]" label="建模工具 - G..." extra labelClass="justify-start pl-[4px]">
        <GridIcons pl="pl-[7px]" gap="gap-[5px]"
          row1={<><Icon n="r11" s={18} /><Icon n="r12" s={18} /><Icon n="r13" s={18} /><Icon n="r14" s={18} /></>}
          row2={<>
            <Icon n="s10" s={18} />
            <Icon n="s11" s={18} />
            <div className="w-px h-[24px] bg-[#d8d8d8]" />
            <div className="flex flex-col items-center leading-none text-[7px] font-bold text-[#333]">
              <Ico s={14}>
                <rect x="1" y="4" width="6" height="9" rx="2" fill="#555" />
                <rect x="9" y="4" width="6" height="9" rx="2" fill="#555" />
                <rect x="6" y="6" width="4" height="3" fill="#888" />
              </Ico>
              <span>10H7</span>
            </div>
          </>}
        />
      </Group>
      <Group w="w-[28px]" label="?.." extra labelClass="justify-start pl-[1px]">
        <GridIcons pl="pl-[6px]" gap="gap-[5px]" row1={<Icon n="cubes" s={18} />} row2={<Icon n="cubes" s={18} />} />
      </Group>
      <Group w="w-[74px]" label="尺寸" sep={false} labelClass="justify-start pl-[57px]">
        <GridIcons pl="pl-[7px]" gap="gap-[5px]"
          row1={<>
            <Icon n="dim" s={18} />
            <span className="ml-[5px] text-[12px] text-[#333]">X</span>
            <span className="ml-[9px] text-[7px] leading-[8px] text-[#333] font-bold whitespace-nowrap">
              1.00
              <br />
              <span className="text-[#c83030]">±.05</span>
            </span>
          </>}
          row2={<><Icon n="s14" s={18} /><Icon n="s15" s={18} /><span className="ml-[4px]"><Icon n="s16" s={18} /></span></>}
        />
      </Group>
    </div>
  );
}

function SelectBox({ w, ml, text }: { w: string; ml: string; text: string }) {
  return (
    <div className={`flex items-center h-[20px] border border-[#a0a0a0] text-[12px] pl-[2px] pr-[7px] text-[#222] shrink-0 ${w} ${ml}`}>
      <span>{text}</span>
      <span className="ml-auto flex"><Caret /></span>
    </div>
  );
}

function SelectionBar() {
  return (
    <div className="flex items-center h-[33px] bg-white border-y border-[#d8d8d8] border-b-[#a8a8a8] text-[#222]">
      <div className="ml-[10px] flex items-center w-[70px] shrink-0">
        <Icon n="menuI" s={17} />
        <span className="ml-[3px] text-[11px]">菜单(<span className="underline">M</span>)</span>
        <span className="ml-[3px] flex"><Caret /></span>
      </div>
      <div className="ml-[6px] w-px h-[24px] bg-[#d8d8d8]" />
      <SelectBox w="w-[133px]" ml="ml-[12px]" text="无选择过滤器" />
      <SelectBox w="w-[140px]" ml="ml-[8px]" text="整个装配" />
      <div className="ml-[10px] flex items-center">
        <Icon n="g1" />
        <span className="ml-[9px]"><Icon n="g2" /></span>
        <span className="ml-[6px]"><Icon n="g3" /></span>
        <span className="ml-[5px] flex"><Caret /></span>
        <span className="ml-[8px]"><Icon n="g4" /></span>
      </div>
      <div className="ml-[395px] flex items-center">
        <Icon n="t1" />
        <span className="ml-[9px]"><Icon n="t2" /></span>
        <span className="ml-[8px]"><Icon n="t3" /></span>
        <div className="ml-[12px] w-px h-[24px] bg-[#d8d8d8]" />
        <span className="ml-[12px]"><Icon n="t4" /></span>
        <span className="ml-[8px]"><Icon n="t5" /></span>
        <span className="ml-[8px]"><Icon n="t6" /></span>
        <span className="ml-[11px]"><Icon n="t7" /></span>
        <span className="ml-[8px]"><Icon n="t8" /></span>
        <span className="ml-[10px]"><Icon n="t9" /></span>
        <span className="ml-[6px] flex"><Caret /></span>
        <span className="ml-[8px]"><Icon n="t10" /></span>
        <span className="ml-[4px] flex"><Caret /></span>
        <span className="ml-[5px]"><Icon n="box" /></span>
      </div>
    </div>
  );
}

// left resource bar
function SideIcon({ h, mt, active, children }: { h: string; mt: string; active?: boolean; children: ReactNode }) {
  return (
    <div className={`flex items-center justify-center ${h} ${mt} ${active ? "ml-[2px] mr-[-1px] bg-white border border-r-0 border-[#bcbcbc] relative" : "pr-[1px]"}`}>
      {children}
    </div>
  );
}

function Sidebar() {
  return (
    <div className="w-[32px] shrink-0 bg-[#dcdcdc] border-r border-[#9c9c9c] flex flex-col">
      <SideIcon h="h-[26px]" mt="mt-0">
        <Ico s={14}>
          <circle cx="8" cy="8" r="5" fill="none" stroke="#333" strokeWidth="2" />
          <path d="M8,0.5 V3 M8,13 V15.5 M0.5,8 H3 M13,8 H15.5 M2.5,2.5 L4.3,4.3 M11.7,11.7 L13.5,13.5 M2.5,13.5 L4.3,11.7 M11.7,4.3 L13.5,2.5" stroke="#333" strokeWidth="1.5" />
        </Ico>
      </SideIcon>
      <SideIcon h="h-[40px]" mt="mt-[17px]">
        <Ico s={24} v={24}>
          <Cube x={1} y={1} w={5} h={4} d={4} {...Y} />
          <Cube x={6} y={5} w={5} h={4} d={4} {...Y} />
          <Cube x={14} y={13} w={4.5} h={3.5} d={4} {...Y} />
          <path d="M5,14 V24 M5,19 H14 M16,10 H24" stroke="#3050a0" strokeWidth="1" />
        </Ico>
      </SideIcon>
      <SideIcon h="h-[40px]" mt="mt-0">
        <Ico s={24} v={24}>
          <polygon points="2,1 11,7 2,13" fill="#1d3ca8" />
          <polygon points="22,1 13,7 22,13" fill="#1d3ca8" />
          <rect x="2" y="14" width="9" height="9" fill="#f4e26a" stroke="#333" />
          <polygon points="13,13 23,23 13,23" fill="#c81c1c" stroke="#600" strokeWidth="0.5" />
        </Ico>
      </SideIcon>
      <SideIcon h="h-[44px]" mt="mt-[2px]" active>
        <Ico s={24} v={24}>
          <path d="M2,3 Q7,0 11,3 V10 Q7,13 2,10 Z" fill="#c890b8" stroke="#803a70" strokeWidth="0.7" />
          <ellipse cx="6.5" cy="3" rx="4.5" ry="2" fill="#e0b8d4" stroke="#803a70" strokeWidth="0.6" />
          <path d="M6,12 V23 M6,18 H13 M13,9 H23" stroke="#222" strokeWidth="1" />
          <circle cx="18" cy="17" r="4" fill="none" stroke="#a04088" strokeWidth="1" />
          <circle cx="18" cy="17" r="1.4" fill="#a04088" />
        </Ico>
      </SideIcon>
      <SideIcon h="h-[40px]" mt="mt-0">
        <Ico s={26} v={26}>
          <path d="M1,8 L6,3 H9 V25 H1 Z" fill="#ee9a2e" stroke="#a8632a" strokeWidth="0.6" />
          <path d="M9,6 L13,3 H17 V25 H9 Z" fill="#3fb84a" stroke="#227a2a" strokeWidth="0.6" />
          <path d="M17,6 L21,1 H25 V20 L21,25 H17 Z" fill="#3f90e0" stroke="#1f5fa8" strokeWidth="0.6" />
          <path d="M3,12 H7 M11,12 H15 M19,10 H23" stroke="#fff" strokeWidth="0.7" opacity="0.6" />
        </Ico>
      </SideIcon>
      <SideIcon h="h-[40px]" mt="mt-[16px]">
        <Ico s={26} v={26}>
          <path d="M9,6 Q18,4 21,14 M10,2 Q22,0 25,14" fill="none" stroke="#3f60c8" strokeWidth="1.8" />
          <circle cx="9" cy="17" r="8" fill="#2f86e0" stroke="#1a4fa8" strokeWidth="0.6" />
          <rect x="7.8" y="15" width="2.6" height="6.5" fill="#fff" />
          <rect x="7.8" y="11.5" width="2.6" height="2.4" fill="#fff" />
        </Ico>
      </SideIcon>
      <SideIcon h="h-[40px]" mt="mt-[13px]">
        <Ico s={24} v={24}>
          <path d="M2,1 H16 L22,7 V23 H2 Z" fill="#fff" stroke="#3a5aa8" />
          <path d="M16,1 V7 H22" fill="#dde6f6" stroke="#3a5aa8" />
          <circle cx="12" cy="15" r="6" fill="#3f90c0" />
          <path d="M8,12 Q12,10 13,14 Q10,19 8,16 Z M14,16 Q17,14 17,17 Q15,20 14,18 Z" fill="#5cb04a" />
        </Ico>
      </SideIcon>
      <SideIcon h="h-[40px]" mt="mt-[13px]">
        <Ico s={24} v={24}>
          <circle cx="12" cy="12" r="11" fill="#bfc4cc" stroke="#6a6f78" />
          <circle cx="12" cy="12" r="8.8" fill="#e2ecfa" />
          <path d="M12,5 V12 H18" fill="none" stroke="#111" strokeWidth="1.5" />
          <path d="M12,20 V20.8 M4,12 H4.8 M19.2,12 H20" stroke="#333" />
        </Ico>
      </SideIcon>
      <SideIcon h="h-[40px]" mt="mt-[3px]">
        <Ico s={24} v={24}>
          <defs>
            <linearGradient id="rb" x1="0" y1="0" x2="0" y2="1">
              <stop offset="0" stopColor="#e81818" />
              <stop offset="0.25" stopColor="#f0c020" />
              <stop offset="0.5" stopColor="#20d040" />
              <stop offset="0.75" stopColor="#18c0d8" />
              <stop offset="1" stopColor="#1830d8" />
            </linearGradient>
          </defs>
          <rect x="1" y="1" width="8" height="22" fill="url(#rb)" />
          <path d="M10,8 L20,22" stroke="#111" strokeWidth="2.4" />
          <circle cx="9" cy="5" r="3" fill="#fff" />
        </Ico>
      </SideIcon>
      <SideIcon h="h-[40px]" mt="mt-[2px]">
        <Ico s={24} v={24}>
          <path d="M3,3 L9,1 V18 L2,20 Z" fill="#3f80d0" stroke="#1f4fa0" strokeWidth="0.5" />
          <path d="M3,7 L9,5 M3,11 L9,9 M3,15 L9,13" stroke="#d0e4f8" />
          <path d="M13,4 H24 L16,11" fill="none" stroke="#3f70c0" strokeWidth="1" />
          <path d="M11,7 L20,19" stroke="#111" strokeWidth="2.4" />
          <circle cx="11" cy="5" r="3" fill="#fff" />
          <path d="M1,22 H10" stroke="#8a9a30" strokeWidth="1.2" strokeDasharray="2 1" />
        </Ico>
      </SideIcon>
      <SideIcon h="h-[40px]" mt="mt-[1px]">
        <Ico s={24} v={24}>
          <path d="M14,2 L23,1 L23,5 L19,5 L17,4 Z" fill="#777" stroke="#333" strokeWidth="0.5" />
          <path d="M18,4 L14,12" stroke="#777" strokeWidth="2.4" />
          <path d="M8,8 L12,15 L9,17 L5,10" fill="#999" stroke="#444" strokeWidth="0.5" />
          <circle cx="15" cy="18" r="4" fill="none" stroke="#777" strokeWidth="2" />
          <path d="M1,23 L5,18 L10,20 L9,23 Z" fill="#ee8a20" />
        </Ico>
      </SideIcon>
    </div>
  );
}

// part navigator
function Exp({ open }: { open?: boolean }) {
  return (
    <div className="relative flex items-center justify-center w-[9px] h-[9px] border border-[#aaa] bg-white shrink-0">
      <div className="w-[5px] h-px bg-[#111]" />
      {!open && <div className="absolute w-px h-[5px] bg-[#111]" />}
    </div>
  );
}

const greenCheck = (
  <Ico s={13} v={13}>
    <path d="M1,7 L3,5 L5.5,8 L11,1 L12.5,2.5 L5.5,12 Z" fill="#2cb93e" stroke="#178a28" strokeWidth="0.4" />
  </Ico>
);

function FolderIco({ lines }: { lines?: boolean }) {
  return (
    <Ico>
      <path d="M1,6 H5 L6,4 H13 V14 H1 Z" fill="#f9d66a" stroke="#9a7a28" strokeWidth="0.8" />
      <path d="M1,14 L3.5,8 H15.5 L13,14 Z" fill="#fbe89a" stroke="#9a7a28" strokeWidth="0.8" />
      {lines && <path d="M9,0.8 H15 M9,2.8 H15" stroke="#333" strokeWidth="1" />}
    </Ico>
  );
}

function CheckBox() {
  return (
    <div className="w-[12px] h-[12px] border border-[#222] bg-white flex items-center justify-center shrink-0">
      <Ico s={10} v={13}>
        <path d="M1,7 L3,5 L5.5,8 L11,1 L12.5,2.5 L5.5,12 Z" fill="#2cb93e" />
      </Ico>
    </div>
  );
}

const sketchNode = (
  <Ico s={15}>
    <rect x="1" y="1" width="5" height="5" fill="#fff" stroke="#222" />
    <rect x="1" y="9" width="5" height="5.5" fill="#fff" stroke="#222" />
    <rect x="9" y="9" width="5.5" height="5.5" fill="#fff" stroke="#222" />
    <path d="M9,5 L14,1" stroke="#d0a030" strokeWidth="2" />
    <path d="M8,7 L9,5" stroke="#c03030" strokeWidth="1" />
  </Ico>
);

function TreeRow({ i, children, latest }: { i: number; children?: ReactNode; latest?: boolean }) {
  return (
    <div className={`flex h-[20px] border-b border-[#ececec] ${i % 2 === 1 ? "bg-[#f8f8f8]" : "bg-white"}`}>
      <div className="w-[200px] border-r-2 border-[#ececec] flex items-center overflow-hidden shrink-0 text-[12px] text-[#222] whitespace-nowrap">{children}</div>
      <div className="w-[100px] border-r-2 border-[#ececec] flex items-center pl-[6px] shrink-0">{latest && greenCheck}</div>
      <div className="flex-1" />
    </div>
  );
}

function Navigator() {
  const blank = Array.from({ length: 23 }, (_, k) => k + 8);
  return (
    <div className="w-[332px] shrink-0 bg-white border-r border-[#9c9c9c] flex flex-col">
      <div className="flex items-center h-[29px] pl-[10px] pr-[17px] text-[12px] text-[#222]">
        <span>部件导航器</span>
        <div className="ml-auto w-[12px] h-[11px] border border-[#222] border-t-2" />
      </div>
      <div className="relative ml-[6px] w-[315px] flex-1 overflow-hidden border-x-2 border-t-2 border-[#dedede]">
        <div className="flex h-[21px] bg-[#f0f0f0] border-b border-[#d8d8d8] text-[12px] text-[#333]">
          <div className="w-[200px] border-r-2 border-[#dcdcdc] flex items-center pl-[6px]">
            <span>名称</span>
            <span className="ml-[13px] w-0 h-0 border-x-[5px] border-b-[5px] border-x-transparent border-b-[#111]" />
          </div>
          <div className="w-[100px] border-r-2 border-[#dcdcdc] pl-[6px] flex items-center">最新</div>
          <div className="flex-1 overflow-hidden pl-[4px] flex items-center">
            <span className="inline-block w-[7px] overflow-hidden whitespace-nowrap">附</span>
          </div>
        </div>
        <TreeRow i={0}>
          <div className="ml-[6px]"><Exp /></div>
          <div className="ml-[4px]">
            <Ico>
              <polygon points="8,1 15,4.5 15,11 8,15 1,11 1,4.5" fill="none" stroke="#2a9a6a" strokeWidth="1.1" />
              <path d="M1,4.5 L8,8 L15,4.5 M8,8 V15 M4.5,3 L11.5,6.5 M11.5,3 L4.5,6.5" fill="none" stroke="#2a9a6a" strokeWidth="0.8" />
              <path d="M8,15 L15,12" stroke="#d06030" strokeWidth="1" />
            </Ico>
          </div>
          <span className="ml-[3px]">模型视图</span>
        </TreeRow>
        <TreeRow i={1}>
          <div className="ml-[6px]"><Exp /></div>
          <div className="ml-[6px]">{greenCheck}</div>
          <div className="ml-[2px]">
            <Ico s={15}>
              <polygon points="1,4 11,1 14,10 3,14" fill="#fff" stroke="#c83030" strokeWidth="1" />
              <circle cx="8" cy="6.5" r="3" fill="#dcdcf0" stroke="#333" strokeWidth="1" />
              <rect x="11" y="6" width="3.5" height="4" fill="#333" />
            </Ico>
          </div>
          <span className="ml-[3px]">摄像机</span>
        </TreeRow>
        <TreeRow i={2}>
          <div className="ml-[6px]"><Exp /></div>
          <div className="ml-[4px]"><FolderIco lines /></div>
          <span className="ml-[3px]">用户表达式</span>
        </TreeRow>
        <TreeRow i={3}>
          <div className="ml-[6px]"><Exp /></div>
          <div className="ml-[4px]"><FolderIco /></div>
          <span className="ml-[3px]">非时间戳记几何体</span>
        </TreeRow>
        <TreeRow i={4}>
          <div className="ml-[6px]"><Exp open /></div>
          <div className="ml-[4px]"><FolderIco /></div>
          <span className="ml-[3px]">模型历史记录</span>
        </TreeRow>
        <TreeRow i={5} latest>
          <div className="ml-[40px]"><CheckBox /></div>
          <div className="ml-[3px]">
            <Ico s={15}>
              <path d="M4,1 V12 L14,6 M4,12 L13,14 M4,6 L9,9 L13,4" fill="none" stroke="#333" strokeWidth="1" />
              <path d="M1,2 H6" stroke="#3050c0" strokeWidth="1" />
              <path d="M10,11 L14,14" stroke="#c83030" strokeWidth="1" />
            </Ico>
          </div>
          <span className="ml-[3px] text-[#333]">基准坐标系 (0)</span>
        </TreeRow>
        <TreeRow i={6} latest>
          <div className="ml-[40px]"><CheckBox /></div>
          <div className="ml-[3px]">{sketchNode}</div>
          <span className="ml-[3px] text-[#333]">草图 (1) "SKETCH_0...</span>
        </TreeRow>
        <TreeRow i={7} latest>
          <div className="ml-[40px]"><CheckBox /></div>
          <div className="ml-[3px]">{sketchNode}</div>
          <span className="ml-[3px] font-bold">草图 (2) "SKETCH_...</span>
        </TreeRow>
        {blank.map((k) => (
          <TreeRow key={k} i={k} />
        ))}
        <svg className="absolute left-0 top-[21px]" width="90" height="170">
          <path d="M9.5,9 V85 M14,10.5 H19 M14,30.5 H19 M14,50.5 H19 M14,70.5 H19 M14,90.5 H19 M28.5,100 V150.5 M29,110.5 H40 M29,130.5 H40 M29,150.5 H40" stroke="#9a9a9a" strokeDasharray="1 1" fill="none" />
        </svg>
      </div>
    </div>
  );
}

function Graphic() {
  return (
    <div className="relative flex-1 flex flex-col min-w-0">
      <div className="flex h-[24px] bg-white border-b-[2px] border-[#5d9db2]">
        <div className="flex items-center w-[137px] h-[22px] bg-[#5ca3b9] pl-[7px] text-[12px] text-white">
          <Ico s={15}>
            <path d="M3,3 L10,1 L14,3 V7 L9,8 V12 L3,15 L1,12 V5 Z" fill="#2f62c8" stroke="#dde" strokeWidth="0.7" />
            <path d="M5,5 L9,3.6 V5.5 L6,7 V11 L5,11 Z" fill="#fff" />
          </Ico>
          <span className="ml-[4px] whitespace-nowrap">山涧果子1.prt</span>
          <span className="ml-[7px]">
            <Ico s={11} v={11}>
              <path d="M1,1 H7 L10,4 V10 H1 Z" fill="none" stroke="#fff" strokeWidth="1.4" />
              <path d="M5,5 L8,8" stroke="#fff" strokeWidth="1.2" />
            </Ico>
          </span>
          <span className="ml-[5px]">
            <Ico s={10} v={10}>
              <path d="M1,1 L9,9 M9,1 L1,9" stroke="#fff" strokeWidth="2" />
            </Ico>
          </span>
        </div>
      </div>
      <div className="relative flex-1 bg-gradient-to-b from-[#b7b8b9] to-[#e8e9ea]">
        <svg className="absolute left-0 top-0" width="821" height="629">
          <path d="M506,407 C546,357 586,337 628,337 C696,337 756,362 821,373" fill="none" stroke="#3f62e0" strokeWidth="1.5" />
          <rect x="382" y="544" width="1.5" height="2" fill="#1c2c8c" />
        </svg>
      </div>
    </div>
  );
}

// the 更多 gallery menu
type Item = [string, string, boolean?];

function MenuItem({ item }: { item: Item | null }) {
  if (!item) return <div className="w-[119px]" />;
  const [ic, t, off] = item;
  return (
    <div className={`flex items-center w-[119px] pl-[4px] pb-[1px] text-[11px] whitespace-nowrap ${off ? "text-[#b9b9b9]" : "text-[#222]"}`}>
      <Icon n={ic} />
      <span className="ml-[3px]">{t}</span>
    </div>
  );
}

function MenuSection({ title, rows }: { title: string; rows: (Item | null)[][] }) {
  return (
    <div className="border-t border-[#dcdcdc] w-[357px]">
      <div className="h-[22px] pl-[6px] text-[13px] leading-[21px] text-[#2a7f98]">{title}</div>
      {rows.map((r, k) => (
        <div key={k} className="flex h-[22px]">
          {r.map((it, j) => (
            <MenuItem key={j} item={it} />
          ))}
        </div>
      ))}
    </div>
  );
}

const sections: { title: string; rows: (Item | null)[][] }[] = [
  { title: "最近使用的", rows: [
    [["mirrorF", "镜像特征"], ["mirrorB", "镜像几何体"], ["sweep", "扫掠"]],
    [["guide", "沿引导线扫掠"], ["trim", "修剪和延伸"], ["bbox", "包容体"]],
  ] },
  { title: "细节特征", rows: [[["draft", "拔模体"], null, null]] },
  { title: "设计特征", rows: [
    [["box", "长方体"], ["cyl", "圆柱"], ["cone", "圆锥"]],
    [["sphere", "球"], ["boss", "凸起"], ["offBoss", "偏置凸起"]],
    [["groove", "槽"], ["rib", "筋板"], ["lattice", "晶格"]],
    [["thread", "螺纹刀"], ["eqn", "按方程创建体", true], ["udf", "用户定义"]],
  ] },
  { title: "关联复制", rows: [
    [["extract", "抽取几何特征"], ["waveL", "WAVE 几何链接器"], ["waveI", "WAVE 接口链接器"]],
    [["waveP", "WAVE PMI 链接器"], ["patF", "阵列面"], ["patG", "阵列几何特征"]],
    [["mirrorF", "镜像特征"], ["mirrorFc", "镜像面"], ["mirrorB", "镜像几何体"]],
    [["promote", "提升体"], ["isolate", "隔离特征的对象"], null],
  ] },
  { title: "组合", rows: [
    [["bossB", "凸起体"], ["assy", "装配切割"], ["sew", "缝合"]],
    [["unsew", "取消缝合"], ["patch", "修补"], null],
  ] },
  { title: "修剪", rows: [
    [["split", "拆分体"], ["trimS", "修剪片体"], ["trim", "修剪和延伸"]],
    [["extS", "延伸片体"], ["divF", "分割面"], ["delB", "删除体"]],
  ] },
  { title: "偏置/缩放", rows: [
    [["thick", "加厚"], ["scale", "缩放体"], ["bbox", "包容体"]],
    [["offS", "偏置曲面"], ["offF", "偏置面"], ["wrap", "包裹几何体"]],
  ] },
  { title: "扫掠", rows: [
    [["sweep", "扫掠"], ["varS", "变化扫掠"], null],
    [["tube", "管"], ["swept", "扫掠体"], null],
  ] },
];

function MoreMenu() {
  return (
    <div className="absolute left-[503px] top-[131px] w-[380px] h-[617px] bg-white border border-[#a8a8a8] shadow-[3px_3px_3px_rgba(0,0,0,0.45)] pl-[1px] pt-[1px]">
      <span className="absolute left-[363px] top-[9px] w-0 h-0 border-x-[4px] border-b-[5px] border-x-transparent border-b-[#111]" />
      {sections.map((s) => (
        <MenuSection key={s.title} title={s.title} rows={s.rows} />
      ))}
      <div className="h-[10px] w-[376px] mt-[1px] bg-[#dcdcdc]" />
      {/* highlighted entry */}
      <div className="absolute left-[239px] top-[559px] flex items-center w-[119px] h-[22px] bg-[#acd4df] pl-[4px] pb-[1px] text-[11px] text-[#222] whitespace-nowrap">
        <Icon n="guide" />
        <span className="ml-[3px]">沿引导线扫掠</span>
      </div>
    </div>
  );
}

function Badge({ n, pos }: { n: string; pos: string }) {
  return (
    <div className={`absolute flex items-center justify-center w-[40px] h-[40px] rounded-full bg-[#f44242] text-white text-[16px] border border-[#ffd6d6] ${pos}`}>
      {n}
    </div>
  );
}

export default function App() {
  return (
    <div className="relative w-[1185px] h-[832px] overflow-hidden bg-white font-['Noto_Sans','Noto_Sans_CJK_SC',sans-serif]">
      <TitleBar />
      <Tabs />
      <Ribbon />
      <SelectionBar />
      <div className="flex h-[653px]">
        <Sidebar />
        <Navigator />
        <Graphic />
      </div>

      {/* highlighted 更多 button in the ribbon */}
      <div className="absolute left-[502px] top-[57px] w-[42px] h-[73px] bg-[#cde4ec] flex flex-col items-center">
        <div className="mt-[3px] w-[37px] h-[33px] bg-[#dff0f5] border border-[#c2dce4] rounded-[3px] flex items-center justify-center">
          <Ico s={18}>
            <Cube x={2} y={7} w={6} h={3.5} d={3.5} t="#9ab4ec" l="#3f70d8" r="#2a50b0" o="#224" />
            <ellipse cx="9" cy="5" rx="2" ry="3.5" fill="#f09a2a" stroke="#a8632a" strokeWidth="0.5" />
          </Ico>
        </div>
        <span className="text-[11px] leading-[14px] mt-[4px] text-[#222]">更多</span>
        <span className="flex mt-[6px]"><Caret /></span>
      </div>
      <div className="absolute left-[494px] top-[50px] w-[56px] h-[73px] border-[2px] border-[#c8202a]" />
      <Badge n="1" pos="left-[441px] top-[67px]" />

      <MoreMenu />

      <div className="absolute left-[736px] top-[688px] w-[119px] h-[29px] border-[2px] border-[#c8202a]" />
      <Badge n="2" pos="left-[870px] top-[679px]" />

      {/* tooltip */}
      <div className="absolute left-[774px] top-[722px] w-[198px] h-[55px] bg-white border border-[#a8a8a8] shadow-[2px_2px_3px_rgba(0,0,0,0.35)] pl-[8px] pt-[7px] text-[#222]">
        <div className="text-[12px] leading-[20px] font-bold">沿引导线扫掠</div>
        <div className="text-[12px] leading-[20px] mt-[2px] whitespace-nowrap tracking-[-0.4px]">通过沿引导线扫掠截面来创建体。</div>
      </div>

      {/* watermark */}
      <div className="absolute right-[14px] bottom-[8px] text-[16px] text-[#333]">CSDN @山涧果子</div>
    </div>
  );
}
